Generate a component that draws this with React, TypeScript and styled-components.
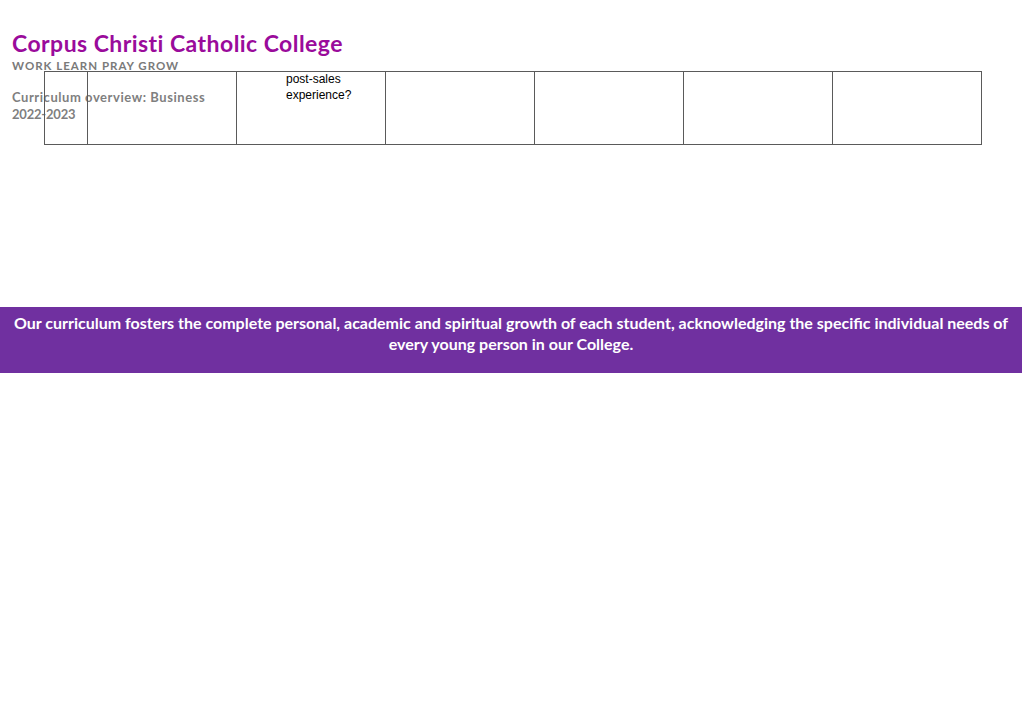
import React from "react";
import styled, { createGlobalStyle } from "styled-components";

const Global = createGlobalStyle`
  html, body { margin: 0; padding: 0; background: #ffffff; }
  body { width: 1024px; height: 726px; overflow: hidden; }
`;

const Page = styled.div`
  position: relative;
  width: 1024px;
  height: 726px;
  background: #ffffff;
  display: flex;
  flex-direction: column;
`;

const Header = styled.header`
  display: flex;
  flex-direction: column;
  padding: 30px 0 0 12px;
`;

const Title = styled.h1`
  margin: 0;
  font-family: "Lato", "DejaVu Sans", sans-serif;
  font-weight: 700;
  font-size: 23px;
  line-height: 27px;
  color: #9a0b9b;
  letter-spacing: 0.45px;
`;

const Motto = styled.div`
  margin-top: 2px;
  font-family: "Lato", "DejaVu Sans", sans-serif;
  font-weight: 700;
  font-size: 11.5px;
  line-height: 14px;
  color: #7a7a7a;
  letter-spacing: 1px;
`;

const Overview = styled.div`
  margin-top: 16px;
  display: flex;
  flex-direction: column;
  font-family: "Lato", "DejaVu Sans", sans-serif;
  font-weight: 700;
  font-size: 13px;
  line-height: 17px;
  color: #7f7f7f;
`;

const OverviewLine = styled.span<{ $spacing: number }>`
  letter-spacing: ${(p) => p.$spacing}px;
`;

const GridTable = styled.div`
  position: absolute;
  left: 44px;
  top: 71px;
  display: grid;
  grid-template-columns: 43px repeat(6, 149px);
  height: 72px;
  border-top: 1px solid #5a5a5a;
  border-bottom: 1px solid #5a5a5a;
  border-left: 1px solid #5a5a5a;
  box-sizing: content-box;
`;

const Cell = styled.div`
  border-right: 1px solid #5a5a5a;
  font-family: "Liberation Sans", Arial, sans-serif;
  font-size: 12px;
  line-height: 15.5px;
  color: #000000;
  padding: 0 0 0 49px;
  overflow: hidden;
  &:first-child { padding: 0; }
`;

const Band = styled.section`
  margin-top: 184px;
  height: 66px;
  width: 1022px;
  background: #7030a0;
  box-sizing: border-box;
  padding-top: 5px;
  display: flex;
  justify-content: center;
`;

const Mission = styled.p`
  margin: 0;
  width: 1012px;
  text-align: center;
  font-family: "Lato", "Open Sans", sans-serif;
  font-weight: 700;
  font-size: 16px;
  line-height: 21px;
  color: #ffffff;
`;

export default function App() {
  const cells = ["", "", "post-sales\nexperience?", "", "", "", ""];
  return (
    <Page>
      <Global />
      <Header>
        <Title>Corpus Christi Catholic College</Title>
        <Motto>WORK LEARN PRAY GROW</Motto>
        <Overview>
          <OverviewLine $spacing={0.55}>Curriculum overview: Business</OverviewLine>
          <OverviewLine $spacing={-0.2}>2022-2023</OverviewLine>
        </Overview>
      </Header>
      <GridTable>
        {cells.map((c, i) => (
          <Cell key={i}>
            {c.split("\n").map((l, j) => (
              <div key={j}>{l}</div>
            ))}
          </Cell>
        ))}
      </GridTable>
      <Band>
        <Mission>
          Our curriculum fosters the complete personal, academic and spiritual growth of each student, acknowledging the specific individual needs of every young person in our College.
        </Mission>
      </Band>
    </Page>
  );
}
